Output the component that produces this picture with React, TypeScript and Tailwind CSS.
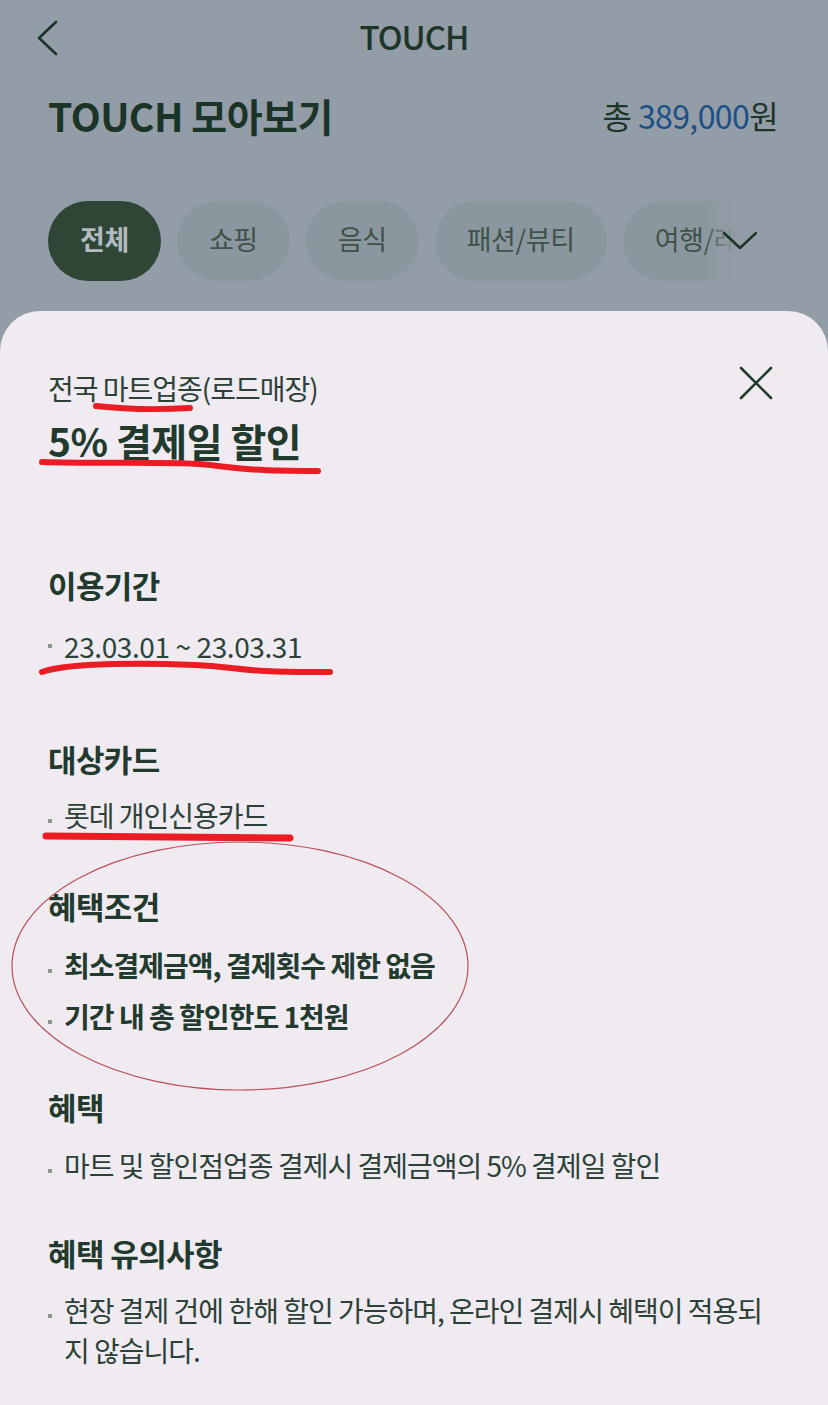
import React from "react";

const chips = ["전체", "쇼핑", "음식", "패션/뷰티", "여행/레저"];

const Dot = ({ mid }: { mid?: boolean }) => (
  <span className={`w-[4px] h-[4px] bg-[#8c968f] shrink-0 ${mid ? "mt-[18px]" : "mt-[24px]"}`} />
);

const Item = ({ children, bold, mid, className = "" }: { children: React.ReactNode; bold?: boolean; mid?: boolean; className?: string }) => (
  <div className={`flex gap-3 ${className}`}>
    <Dot mid={mid} />
    <p className={`leading-[40px] text-[28px] tracking-[-1px] ${bold ? "font-bold text-[#233a2f]" : "text-[#2c4238]"}`}>{children}</p>
  </div>
);

const Heading = ({ children, className = "" }: { children: React.ReactNode; className?: string }) => (
  <h3 className={`text-[31px] leading-[40px] font-bold tracking-[-0.6px] text-[#223a2e] ${className}`}>{children}</h3>
);

export default function App() {
  return (
    <div className="relative w-[828px] h-[1405px] overflow-hidden bg-[#939da7] flex flex-col font-['Noto_Sans_CJK_KR','Noto_Sans',sans-serif]">
      {/* header */}
      <div className="grid grid-cols-[1fr_auto_1fr] items-center h-[76px]">
        <div className="pl-[34px]">
          <svg width="26" height="38" viewBox="0 0 26 38" fill="none">
            <path d="M22 3 L5 19 L22 35" stroke="#1c3427" strokeWidth="2.6" strokeLinecap="round" strokeLinejoin="round" />
          </svg>
        </div>
        <h1 className="text-[33px] font-medium text-[#1d3629] tracking-[-1px] -mt-[3px]">TOUCH</h1>
        <div />
      </div>

      {/* summary */}
      <div className="flex items-center justify-between h-[78px] px-12 pr-[50px]">
        <h2 className="text-[39px] font-bold text-[#1b3427] tracking-[-0.5px]">TOUCH 모아보기</h2>
        <p className="text-[32px] text-[#1d3629] tracking-[-0.6px]">
          총 <span className="text-[#1b4f86]">389,000</span>원
        </p>
      </div>

      {/* chips */}
      <div className="relative mt-[47px] h-[80px] overflow-hidden">
        <div className="flex gap-4 pl-12 h-full">
          {chips.map((c, i) => (
            <div
              key={c}
              className={`h-full shrink-0 rounded-full px-8 flex items-center text-[27px] tracking-[-0.4px] pb-[3px] ${
                i === 0 ? "bg-[#2f4536] text-[#b2bbc1] font-bold" : "bg-[#8b979f] text-[#3e5249]"
              }`}
            >
              {c}
            </div>
          ))}
        </div>
        <div className="absolute right-0 top-0 h-full w-[126px] bg-linear-to-r from-[#939da7]/0 to-[#939da7] to-28% flex items-center pl-[20px]">
          <svg width="36" height="20" viewBox="0 0 36 20" fill="none">
            <path d="M2 2 L18 17 L34 2" stroke="#1c3427" strokeWidth="2.4" strokeLinecap="round" strokeLinejoin="round" />
          </svg>
        </div>
      </div>

      {/* sheet */}
      <div className="mt-[30px] flex-1 bg-[#f0ebf1] rounded-t-[40px] pl-12 pr-[56px] pt-[57px]">
        <div className="flex justify-between items-start">
          <div>
            <p className="text-[28px] leading-[40px] text-[#2c4238] tracking-[-1px]">전국 마트업종(로드매장)</p>
            <h2 className="mt-[12px] text-[39px] leading-[40px] font-bold text-[#223a2e] tracking-[-0.5px]">5% 결제일 할인</h2>
          </div>
          <svg width="34" height="34" viewBox="0 0 34 34" fill="none" className="mt-[-2px] mr-[-1px]">
            <path d="M2 2 L32 32 M32 2 L2 32" stroke="#243a2f" strokeWidth="2.6" strokeLinecap="round" />
          </svg>
        </div>

        <Heading className="mt-[105px]">이용기간</Heading>
        <div className="flex gap-3 mt-[21px]">
          <Dot mid />
          <p className="leading-[40px] text-[28px] text-[#2c4238] tracking-[-0.4px]">23.03.01 ~ 23.03.31</p>
        </div>

        <Heading className="mt-[73px]">대상카드</Heading>
        <Item className="mt-[16px]">롯데 개인신용카드</Item>

        <Heading className="mt-[51px]">혜택조건</Heading>
        <Item bold className="mt-[19px]">최소결제금액, 결제횟수 제한 없음</Item>
        <Item bold className="mt-[11px]">기간 내 총 할인한도 1천원</Item>

        <Heading className="mt-[51px]">혜택</Heading>
        <Item className="mt-[18px]">마트 및 할인점업종 결제시 결제금액의 5% 결제일 할인</Item>

        <Heading className="mt-[48px]">혜택 유의사항</Heading>
        <Item className="mt-[17px]">
          현장 결제 건에 한해 할인 가능하며, 온라인 결제시 혜택이 적용되
          <br />지 않습니다.
        </Item>
      </div>

      {/* hand-drawn annotations */}
      <svg className="absolute inset-0 pointer-events-none" width="828" height="1405" viewBox="0 0 828 1405" fill="none">
        <path d="M96 406 Q 140 411 190 408" stroke="#ec1c24" strokeWidth="6" strokeLinecap="round" />
        <path d="M42 462 C 100 464, 180 461, 210 465 S 260 471, 318 471" stroke="#ec1c24" strokeWidth="6" strokeLinecap="round" />
        <path d="M42 672 C 70 662, 150 663, 195 665 S 240 673, 330 672" stroke="#ec1c24" strokeWidth="6" strokeLinecap="round" />
        <path d="M46 836 L 290 838" stroke="#ec1c24" strokeWidth="7" strokeLinecap="round" />
        <ellipse cx="240" cy="966" rx="228" ry="124" stroke="#b8505a" strokeWidth="1.2" />
      </svg>
    </div>
  );
}
